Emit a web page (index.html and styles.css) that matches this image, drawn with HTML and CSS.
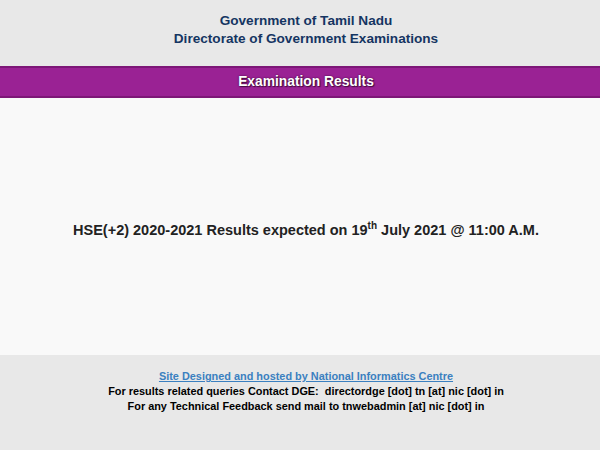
FILE: index.html
```html
<!DOCTYPE html>
<html>
<head>
<meta charset="utf-8">
<link rel="stylesheet" href="styles.css">
</head>
<body>
<header class="top">
  <div class="gov">Government of Tamil Nadu</div>
  <div class="gov">Directorate of Government Examinations</div>
</header>
<div class="bar">Examination Results</div>
<main class="content">
  <p class="notice">HSE(+2) 2020-2021 Results expected on 19<sup>th</sup> July 2021 @ 11:00 A.M.</p>
</main>
<footer class="foot">
  <a class="nic" href="#">Site Designed and hosted by National Informatics Centre</a>
  <div class="fline">For results related queries Contact DGE:&nbsp; directordge [dot] tn [at] nic [dot] in</div>
  <div class="fline">For any Technical Feedback send mail to tnwebadmin [at] nic [dot] in</div>
</footer>
</body>
</html>
```
FILE: styles.css
```css
html, body {
  margin: 0;
  padding: 0;
}
body {
  font-family: "Liberation Sans", Arial, sans-serif;
  background: #e8e8e8;
  width: 600px;
  height: 450px;
  overflow: hidden;
}
.top {
  height: 66px;
  box-sizing: border-box;
  padding-top: 12px;
  padding-left: 12px;
  text-align: center;
  background: #e8e8e8;
}
.gov {
  font-size: 13.6px;
  font-weight: bold;
  color: #153562;
  line-height: 18px;
}
.bar {
  height: 32px;
  box-sizing: border-box;
  padding-left: 12px;
  background: #9a2294;
  border-top: 2px solid #7d1777;
  border-bottom: 2px solid #7d1777;
  box-shadow: 0 1px 0 #d9a6d4;
  color: #ffffff;
  font-weight: bold;
  font-size: 13.8px;
  text-align: center;
  line-height: 28px;
  text-shadow: 0 0 2px #3a0a37, 1px 1px 1px #4a0c45;
}
.content {
  height: 257px;
  box-sizing: border-box;
  padding-left: 12px;
  background: #f9f9f9;
  display: flex;
  align-items: center;
  justify-content: center;
}
.notice {
  margin: 0;
  margin-top: 6px;
  font-size: 14.5px;
  font-weight: bold;
  color: #222222;
}
.notice sup {
  font-size: 10px;
  line-height: 0;
}
.foot {
  padding-top: 14px;
  padding-left: 12px;
  text-align: center;
  font-size: 10.9px;
  font-weight: bold;
  line-height: 15px;
}
.nic {
  display: block;
  color: #3b80c0;
  text-decoration: underline;
}
.fline {
  color: #000000;
}
```
